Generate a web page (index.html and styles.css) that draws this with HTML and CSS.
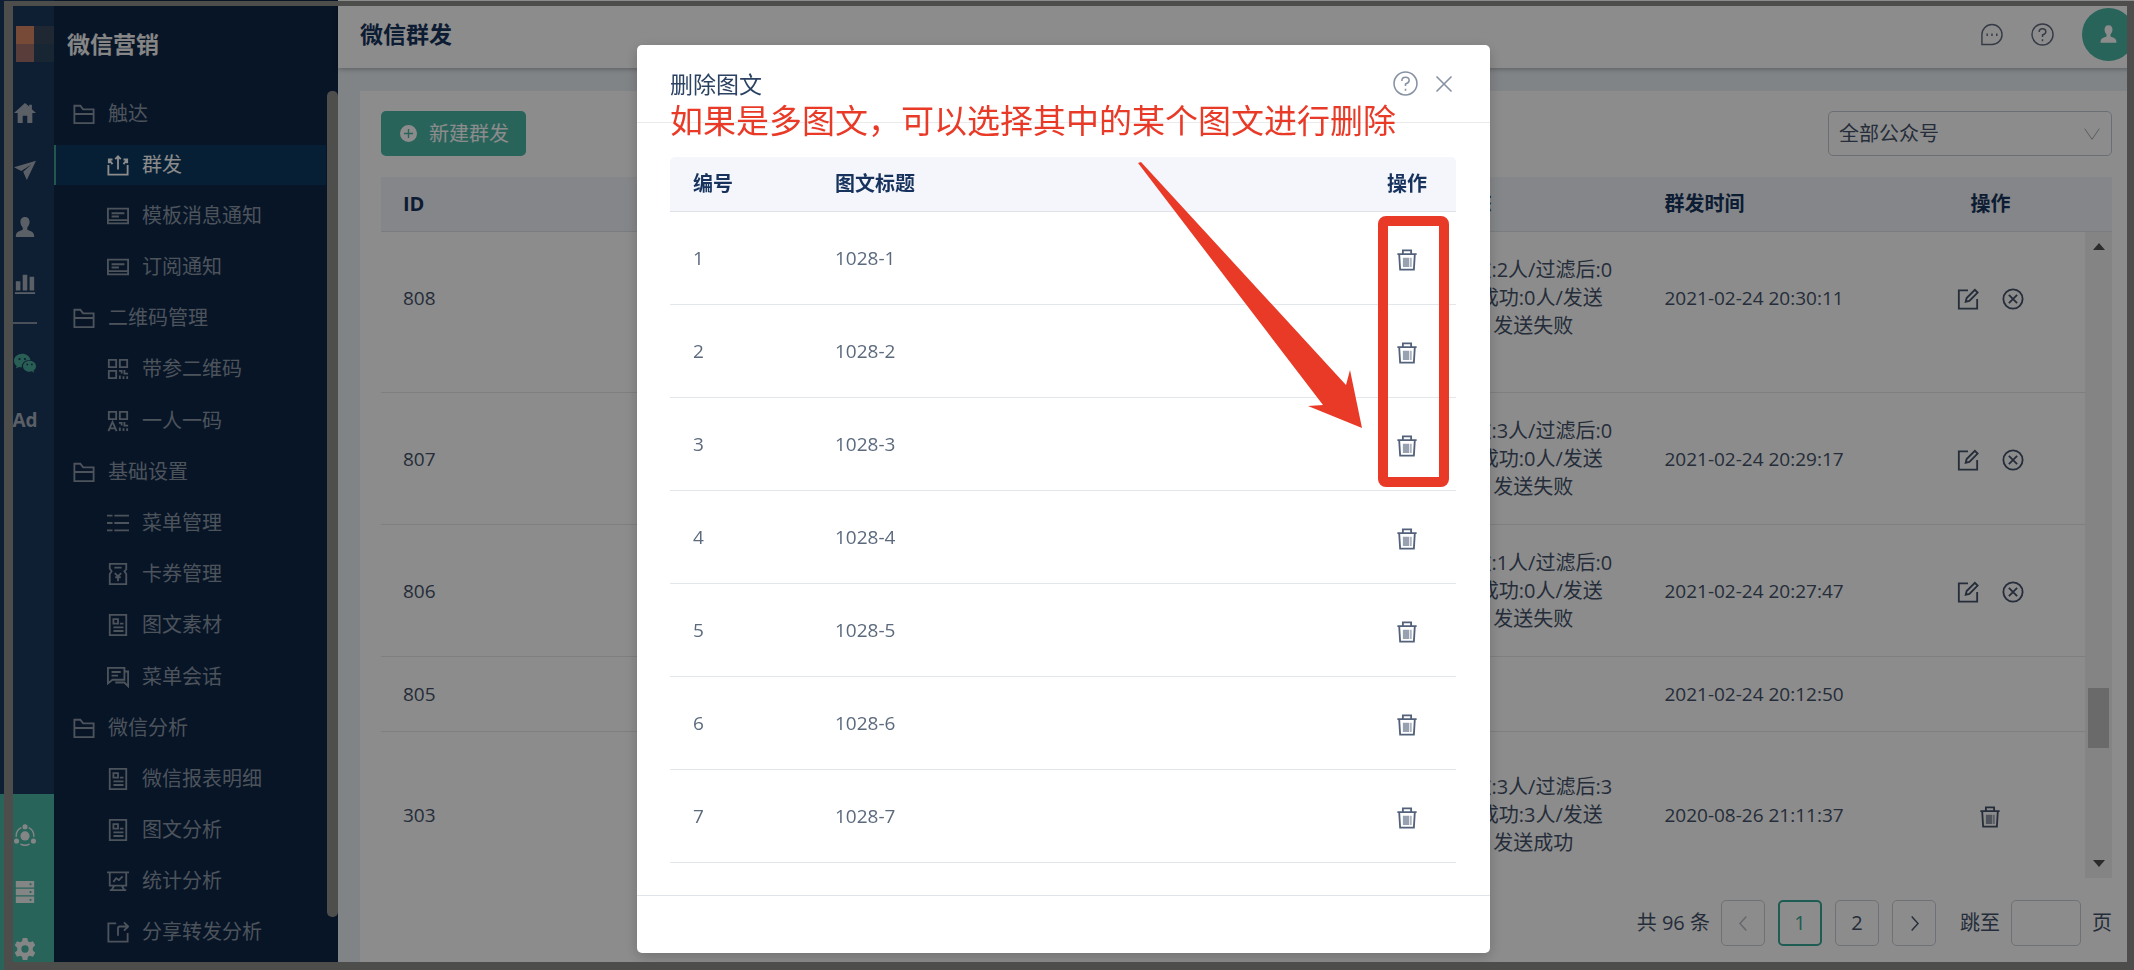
FILE: index.html
```
<!DOCTYPE html>
<html lang="zh-CN">
<head>
    <meta charset="UTF-8">
    <meta name="viewport" content="width=device-width, initial-scale=1.0">
    <title>微信群发</title>
    <link rel="stylesheet" href="styles.css">
</head>
<body>
    <!-- Icon set -->
    <svg class="icon-defs" aria-hidden="true">
        <symbol id="i-home" viewBox="0 0 24 24"><path fill="currentColor" d="M12 1L0 12h4v11h5.500v-8h5v8H20V12h4l-4.500-4.200V3h-3v2z"/></symbol>
        <symbol id="i-plane" viewBox="0 0 24 24"><path fill="currentColor" d="M24 2L0 9l8 4 11-7-9 8 4 9z"/></symbol>
        <symbol id="i-user" viewBox="0 0 24 24"><path fill="currentColor" d="M12 1c-3.500 0-5 2.500-5 5.500 0 3 1.500 4.500 2.500 6v2.500C6 16.500 2 17 2 22v1h20v-1c0-5-4-5.500-7.500-7v-2.500c1-1.500 2.500-3 2.500-6C17 3.500 15.500 1 12 1z"/></symbol>
        <symbol id="i-chart" viewBox="0 0 24 24"><path fill="currentColor" d="M2 9h5v10H2zM9.500 2h5v17h-5zM17 4h5v15h-5zM1 21h22v2H1z"/></symbol>
        <symbol id="i-wechat" viewBox="0 0 24 24"><path fill="currentColor" fill-rule="evenodd" d="M9 2C4 2 0 5.200 0 9.500c0 2.400 1.200 4.300 3 5.700L2 18l3.500-1.700c1 .3 2 .5 3 .5C8 12 12 8.500 18 8.700 17 4.700 13.500 2 9 2zM6 6.500a1.200 1.200 0 1 1 0 2.400 1.200 1.200 0 0 1 0-2.400zm6 0a1.200 1.200 0 1 1 0 2.400 1.200 1.200 0 0 1 0-2.400z"/><path fill="currentColor" fill-rule="evenodd" d="M17 9.500c-4 0-7.200 2.700-7.200 6s3.200 6 7.200 6c.9 0 1.700-.1 2.500-.4L22 22.500l-.7-2.400c1.700-1.100 2.700-2.700 2.700-4.600 0-3.300-3-6-7-6zm-2.500 3a1 1 0 1 1 0 2 1 1 0 0 1 0-2zm5 0a1 1 0 1 1 0 2 1 1 0 0 1 0-2z"/></symbol>
        <symbol id="i-net" viewBox="0 0 24 24"><g fill="currentColor"><circle cx="12" cy="13" r="5"/><circle cx="12" cy="3" r="2.800"/><circle cx="2.800" cy="18.500" r="2.800"/><circle cx="21.200" cy="18.500" r="2.800"/></g><path fill="none" stroke="currentColor" stroke-width="1.500" d="M8 4a10 10 0 0 0-5.500 10M16 4a10 10 0 0 1 5.500 10M7 22q5 2.500 10 0"/></symbol>
        <symbol id="i-server" viewBox="0 0 24 24"><path fill="currentColor" fill-rule="evenodd" d="M2 0h20v7H2zM2 8.500h20v7H2zM2 17h20v7H2zM17 2.500v2h2v-2zM17 11v2h2v-2zM17 19.500v2h2v-2z"/></symbol>
        <symbol id="i-gear" viewBox="0 0 24 24"><path fill="currentColor" fill-rule="evenodd" d="M9.500 0h5l.7 3.600 2 1.100 3.500-1.200L23.200 8l-2.700 2.500v3l2.700 2.500-2.500 4.500-3.500-1.200-2 1.100-.7 3.600h-5l-.7-3.600-2-1.100-3.500 1.200L.8 16l2.700-2.500v-3L.8 8l2.500-4.500 3.500 1.200 2-1.100zM12 8a4 4 0 1 0 0 8 4 4 0 0 0 0-8z"/></symbol>
        <symbol id="i-folder" viewBox="0 0 24 24"><path d="M1.500 22V3H8l3 4h11.500v15zM1.500 12h21"/></symbol>
        <symbol id="i-mass" viewBox="0 0 24 24"><path d="M1.500 12v10.500h21V12M12 17V3M9 5.500l3-3 3 3M2 10V6h4M2.500 6.500L6 11M22 10V6h-4M21.500 6.500L18 11"/></symbol>
        <symbol id="i-msg" viewBox="0 0 24 24"><path d="M1 4h22v16H1zM1 16.500h22M5 9h14M5 12.500h8"/></symbol>
        <symbol id="i-qr" viewBox="0 0 24 24"><path d="M2 2h8v8H2zM14 2h8v8h-8zM2 14h8v8H2zM13 14h3v3M19 13v4h4M14 19v4M18 20v3M22 20v3"/></symbol>
        <symbol id="i-qr-a" viewBox="0 0 24 24"><path d="M2 2h8v8H2zM14 2h8v8h-8zM1.500 23L6 13l4.500 10M3 20h6M13 14h3v3M19 13v4h4M14 19v4M18 20v3M22 20v3"/></symbol>
        <symbol id="i-list" viewBox="0 0 24 24"><path d="M0 4h6M8 4h16M0 12h6M8 12h16M0 20h6M8 20h16"/></symbol>
        <symbol id="i-coupon" viewBox="0 0 24 24"><path d="M3 1h18v6l-2 2 2 3v11H3V12l2-3-2-3zM8 5h8M8.500 11l3.500 3.500 3.500-3.500M12 14v6M9 15.500h6"/></symbol>
        <symbol id="i-doc" viewBox="0 0 24 24"><path d="M3 1h18v22H3zM7 5.500h5v5H7zM14 10.500h4M7 14.500h11M7 18.500h11"/></symbol>
        <symbol id="i-talk" viewBox="0 0 24 24"><path d="M1 2h18v13H6l-5 4zM19 6h4v16l-4-4H9M5 6.500h10M5 10.500h7"/></symbol>
        <symbol id="i-board" viewBox="0 0 24 24"><path d="M0 2.500h24M3 2.500V17h18V2.500M7 13l3-4 3 2 4-4M8 17l-3 5M16 17l3 5M3 22h18"/></symbol>
        <symbol id="i-share" viewBox="0 0 24 24"><path d="M10 2.500H1.500v20h21V13M12 16V8q0-2 2-2h8M18.500 1.500L23 6l-4.500 4.500"/></symbol>
        <symbol id="i-chat" viewBox="0 0 24 24"><path d="M2 22.500V12a10.500 10.500 0 1 1 10.500 10.500zM7.500 11v2.500M12.500 11v2.500M17.500 11v2.500"/></symbol>
        <symbol id="i-help" viewBox="0 0 24 24"><path d="M12 1a11 11 0 1 0 0 22 11 11 0 0 0 0-22zM8.500 9.500Q8.500 6 12 6t3.500 3q0 2-3.500 3.500V14.500M12 17v2"/></symbol>
        <symbol id="i-close" viewBox="0 0 24 24"><path d="M3 3l18 18M21 3L3 21"/></symbol>
        <symbol id="i-plus" viewBox="0 0 24 24"><path fill="currentColor" fill-rule="evenodd" d="M12 0a12 12 0 1 0 0 24 12 12 0 0 0 0-24zM11 5.500h2V11h5.500v2H13v5.500h-2V13H5.500v-2H11z"/></symbol>
        <symbol id="i-edit" viewBox="0 0 24 24"><path d="M12 2.500H2v20h20V12M9.500 15l1-4L19.500 2l3 3-9 9z"/></symbol>
        <symbol id="i-cancel" viewBox="0 0 24 24"><path d="M12 1.500a10.500 10.500 0 1 0 0 21 10.500 10.500 0 0 0 0-21zM7.500 7.500l9 9M16.500 7.500l-9 9"/></symbol>
        <symbol id="i-trash" viewBox="0 0 24 24"><path d="M1.500 5.500h21M7.500 5V1.500h9V5M3.500 6l1 16.500h15L20.500 6"/><path fill="currentColor" stroke="none" opacity=".6" d="M7.500 9.500h7v10h-7zM15.500 9.500h1.500v10h-1.500z"/></symbol>
        <symbol id="i-down" viewBox="0 0 24 24"><path d="M1 4l11 16L23 4"/></symbol>
        <symbol id="i-prev" viewBox="0 0 24 24"><path d="M16 2L7 12l9 10"/></symbol>
        <symbol id="i-next" viewBox="0 0 24 24"><path d="M8 2l9 10-9 10"/></symbol>
    </svg>

    <div class="app">
        <nav class="rail" aria-label="主导航">
            <div class="logo"><i></i><i></i><i></i><i></i></div>
            <a href="#"><svg class="icon"><use href="#i-home"/></svg></a>
            <a href="#"><svg class="icon"><use href="#i-plane"/></svg></a>
            <a href="#"><svg class="icon"><use href="#i-user"/></svg></a>
            <a href="#"><svg class="icon"><use href="#i-chart"/></svg></a>
            <hr>
            <a href="#" class="wechat"><svg class="icon"><use href="#i-wechat"/></svg></a>
            <a href="#">Ad</a>
            <div class="rail-bottom">
                <a href="#"><svg class="icon"><use href="#i-net"/></svg></a>
                <a href="#"><svg class="icon"><use href="#i-server"/></svg></a>
                <a href="#"><svg class="icon"><use href="#i-gear"/></svg></a>
            </div>
        </nav>

        <aside class="sidebar">
            <h2>微信营销</h2>
            <div class="sidebar-body">
                <ul class="menu">
                    <li class="group"><svg class="icon"><use href="#i-folder"/></svg>触达</li>
                    <li><a href="#" class="active"><svg class="icon"><use href="#i-mass"/></svg>群发</a></li>
                    <li><a href="#"><svg class="icon"><use href="#i-msg"/></svg>模板消息通知</a></li>
                    <li><a href="#"><svg class="icon"><use href="#i-msg"/></svg>订阅通知</a></li>
                    <li class="group"><svg class="icon"><use href="#i-folder"/></svg>二维码管理</li>
                    <li><a href="#"><svg class="icon"><use href="#i-qr"/></svg>带参二维码</a></li>
                    <li><a href="#"><svg class="icon"><use href="#i-qr-a"/></svg>一人一码</a></li>
                    <li class="group"><svg class="icon"><use href="#i-folder"/></svg>基础设置</li>
                    <li><a href="#"><svg class="icon"><use href="#i-list"/></svg>菜单管理</a></li>
                    <li><a href="#"><svg class="icon"><use href="#i-coupon"/></svg>卡券管理</a></li>
                    <li><a href="#"><svg class="icon"><use href="#i-doc"/></svg>图文素材</a></li>
                    <li><a href="#"><svg class="icon"><use href="#i-talk"/></svg>菜单会话</a></li>
                    <li class="group"><svg class="icon"><use href="#i-folder"/></svg>微信分析</li>
                    <li><a href="#"><svg class="icon"><use href="#i-doc"/></svg>微信报表明细</a></li>
                    <li><a href="#"><svg class="icon"><use href="#i-doc"/></svg>图文分析</a></li>
                    <li><a href="#"><svg class="icon"><use href="#i-board"/></svg>统计分析</a></li>
                    <li><a href="#"><svg class="icon"><use href="#i-share"/></svg>分享转发分析</a></li>
                </ul>
                <div class="menu-scroll"></div>
            </div>
        </aside>

        <main class="main">
            <header class="topbar">
                <h1>微信群发</h1>
                <button type="button" class="icon-btn" aria-label="消息"><svg class="icon"><use href="#i-chat"/></svg></button>
                <button type="button" class="icon-btn" aria-label="帮助"><svg class="icon"><use href="#i-help"/></svg></button>
                <button type="button" class="avatar" aria-label="账号"><svg class="icon"><use href="#i-user"/></svg></button>
            </header>

            <section class="card">
                <div class="toolbar">
                    <button type="button" class="btn-new"><svg class="icon"><use href="#i-plus"/></svg>新建群发</button>
                    <div class="select">
                        <select aria-label="公众号">
                            <option>全部公众号</option>
                        </select>
                        <svg class="icon"><use href="#i-down"/></svg>
                    </div>
                </div>

                <div class="table-wrap">
                    <table class="list">
                        <colgroup>
                            <col>
                            <col class="col-state">
                            <col class="col-time">
                            <col class="col-op">
                        </colgroup>
                        <thead>
                            <tr><th>ID</th><th>发送状态</th><th>群发时间</th><th class="op">操作</th></tr>
                        </thead>
                        <tbody>
                            <tr class="first">
                                <td>808</td>
                                <td class="state">发送总数:2人/过滤后:0<br>人/发送成功:0人/发送<br>失败:0人 发送失败</td>
                                <td>2021-02-24 20:30:11</td>
                                <td class="op">
                                    <button type="button" class="icon-btn" aria-label="编辑"><svg class="icon"><use href="#i-edit"/></svg></button>
                                    <button type="button" class="icon-btn" aria-label="取消"><svg class="icon"><use href="#i-cancel"/></svg></button>
                                </td>
                            </tr>
                            <tr>
                                <td>807</td>
                                <td class="state">发送总数:3人/过滤后:0<br>人/发送成功:0人/发送<br>失败:0人 发送失败</td>
                                <td>2021-02-24 20:29:17</td>
                                <td class="op">
                                    <button type="button" class="icon-btn" aria-label="编辑"><svg class="icon"><use href="#i-edit"/></svg></button>
                                    <button type="button" class="icon-btn" aria-label="取消"><svg class="icon"><use href="#i-cancel"/></svg></button>
                                </td>
                            </tr>
                            <tr>
                                <td>806</td>
                                <td class="state">发送总数:1人/过滤后:0<br>人/发送成功:0人/发送<br>失败:0人 发送失败</td>
                                <td>2021-02-24 20:27:47</td>
                                <td class="op">
                                    <button type="button" class="icon-btn" aria-label="编辑"><svg class="icon"><use href="#i-edit"/></svg></button>
                                    <button type="button" class="icon-btn" aria-label="取消"><svg class="icon"><use href="#i-cancel"/></svg></button>
                                </td>
                            </tr>
                            <tr class="short">
                                <td>805</td>
                                <td></td>
                                <td>2021-02-24 20:12:50</td>
                                <td></td>
                            </tr>
                            <tr class="last">
                                <td>303</td>
                                <td class="state">发送总数:3人/过滤后:3<br>人/发送成功:3人/发送<br>失败:0人 发送成功</td>
                                <td>2020-08-26 21:11:37</td>
                                <td class="op">
                                    <button type="button" class="icon-btn" aria-label="删除"><svg class="icon"><use href="#i-trash"/></svg></button>
                                </td>
                            </tr>
                        </tbody>
                    </table>
                    <div class="scrollbar">
                        <div class="scroll-head"></div>
                        <div class="scroll-track">
                            <span class="arrow-up"></span>
                            <span class="thumb"></span>
                            <span class="arrow-down"></span>
                        </div>
                    </div>
                </div>

                <div class="pagination">
                    <span>共 96 条</span>
                    <div class="pages">
                        <button type="button" disabled aria-label="上一页"><svg class="icon"><use href="#i-prev"/></svg></button>
                        <button type="button" class="current">1</button>
                        <button type="button">2</button>
                        <button type="button" aria-label="下一页"><svg class="icon"><use href="#i-next"/></svg></button>
                    </div>
                    <label for="jump">跳至</label>
                    <input type="text" id="jump">
                    <span>页</span>
                </div>
            </section>
        </main>
    </div>

    <div class="mask">
        <section class="modal" role="dialog" aria-labelledby="modalTitle">
            <header class="modal-header">
                <h3 id="modalTitle">删除图文</h3>
                <button type="button" class="icon-btn" aria-label="帮助"><svg class="icon"><use href="#i-help"/></svg></button>
                <button type="button" class="icon-btn close" aria-label="关闭"><svg class="icon"><use href="#i-close"/></svg></button>
            </header>
            <div class="modal-body">
                <table class="articles">
                    <colgroup>
                        <col class="col-no">
                        <col>
                        <col class="col-del">
                    </colgroup>
                    <thead>
                        <tr><th>编号</th><th>图文标题</th><th class="op">操作</th></tr>
                    </thead>
                    <tbody>
                        <tr><td>1</td><td>1028-1</td><td class="op"><button type="button" class="icon-btn" aria-label="删除"><svg class="icon"><use href="#i-trash"/></svg></button></td></tr>
                        <tr><td>2</td><td>1028-2</td><td class="op"><button type="button" class="icon-btn" aria-label="删除"><svg class="icon"><use href="#i-trash"/></svg></button></td></tr>
                        <tr><td>3</td><td>1028-3</td><td class="op"><button type="button" class="icon-btn" aria-label="删除"><svg class="icon"><use href="#i-trash"/></svg></button></td></tr>
                        <tr><td>4</td><td>1028-4</td><td class="op"><button type="button" class="icon-btn" aria-label="删除"><svg class="icon"><use href="#i-trash"/></svg></button></td></tr>
                        <tr><td>5</td><td>1028-5</td><td class="op"><button type="button" class="icon-btn" aria-label="删除"><svg class="icon"><use href="#i-trash"/></svg></button></td></tr>
                        <tr><td>6</td><td>1028-6</td><td class="op"><button type="button" class="icon-btn" aria-label="删除"><svg class="icon"><use href="#i-trash"/></svg></button></td></tr>
                        <tr><td>7</td><td>1028-7</td><td class="op"><button type="button" class="icon-btn" aria-label="删除"><svg class="icon"><use href="#i-trash"/></svg></button></td></tr>
                    </tbody>
                </table>
            </div>
            <footer class="modal-footer"></footer>

            <!-- Callout over the dialog -->
            <p class="note">如果是多图文，可以选择其中的某个图文进行删除</p>
            <svg class="note-arrow" viewBox="0 0 226 268" aria-hidden="true"><path d="M0 2L3 1 208 224 212 209 224 267 170 245 185 244z"/></svg>
            <div class="note-box"></div>
        </section>
    </div>

    <div class="frame"></div>
</body>
</html>
```

FILE: styles.css
```
* {
    box-sizing: border-box;
}
body {
    margin: 0;
    font-family: "Open Sans", "Noto Sans CJK SC", sans-serif;
    font-size: 20px;
    line-height: 28px;
    color: #45526a;
    background: #fff;
    overflow: hidden;
}
h1, h2, h3, p, ul {
    margin: 0;
    padding: 0;
}
h1, h2, h3 {
    font-size: 23px;
    line-height: 32px;
}
button, input, select {
    font: inherit;
    color: inherit;
    margin: 0;
}
a {
    color: inherit;
    text-decoration: none;
}
.icon-defs {
    position: absolute;
    width: 0;
    height: 0;
}
.icon {
    display: block;
    width: 22px;
    height: 22px;
    flex: none;
    fill: none;
    stroke: currentColor;
    stroke-width: 1.5;
}
.icon-btn {
    display: inline-block;
    padding: 0;
    border: 0;
    background: none;
    cursor: pointer;
}
.app {
    display: flex;
    height: 100vh;
}

/* Icon rail */
.rail {
    display: flex;
    flex-direction: column;
    width: 54px;
    flex: none;
    padding-top: 26px;
    color: #a5afbb;
    background: #1b375e;
}
.rail a {
    display: flex;
    align-items: center;
    justify-content: center;
    height: 57px;
    flex: none;
    padding-right: 4px;
    font-size: 19px;
    font-weight: bold;
}
.rail .icon {
    stroke: none;
}
.rail hr {
    width: 24px;
    height: 2px;
    margin: 10px 0 10px 13px;
    border: 0;
    background: #8793a3;
}
.rail .wechat {
    color: #4bab9b;
}
.logo {
    display: grid;
    grid-template-columns: 18px 1fr;
    grid-template-rows: 18px 18px;
    margin-bottom: 22px;
    padding-left: 16px;
}
.logo i {
    background: #3a4a5b;
}
.logo i:nth-child(1) {
    background: #d98764;
}
.logo i:nth-child(3) {
    background: #a0706a;
}
.logo i:nth-child(4) {
    background: #2c4560;
}
.rail-bottom {
    height: 176px;
    margin-top: auto;
    padding-top: 12px;
    overflow: hidden;
    color: #f0f5f4;
    background: #4bb6a7;
}
.rail-bottom a {
    height: 57px;
}

/* Menu */
.sidebar {
    display: flex;
    flex-direction: column;
    width: 284px;
    flex: none;
    color: #8b97a6;
    background: #0e2748;
}
.sidebar h2 {
    padding: 28px 0 28px 13px;
    color: #f4f4f4;
}
.sidebar-body {
    display: flex;
    flex: 1;
    padding-bottom: 12px;
}
.menu {
    display: grid;
    grid-auto-rows: 1fr;
    align-items: center;
    flex: 1;
    list-style: none;
}
.menu .group {
    display: flex;
    align-items: center;
    gap: 13px;
    padding-left: 19px;
}
.menu a {
    display: flex;
    align-items: center;
    gap: 13px;
    height: 40px;
    padding-left: 51px;
    border-left: 2px solid transparent;
}
.menu .icon {
    stroke-width: 2;
}
.menu a.active {
    color: #fff;
    background: #0c3a5f;
    border-left-color: #3f9d90;
}
.menu-scroll {
    width: 11px;
    margin: 3px 0 41px 1px;
    border-radius: 5px;
    background: #8f8f8d;
}

/* Page */
.main {
    display: flex;
    flex-direction: column;
    flex: 1;
    background: #ebf0f6;
}
.topbar {
    display: flex;
    align-items: center;
    height: 68px;
    padding-left: 22px;
    gap: 28px;
    color: #616b80;
    background: #fff;
    box-shadow: 0 1px 5px rgba(0, 0, 0, 0.3);
}
.topbar h1 {
    flex: 1;
    color: #17335d;
}
.topbar .icon-btn .icon {
    width: 23px;
    height: 23px;
}
.avatar {
    display: flex;
    align-items: center;
    justify-content: center;
    width: 53px;
    height: 53px;
    margin-right: -1px;
    padding: 0;
    border: 0;
    border-radius: 50%;
    color: #fff;
    background: #4bb6a7;
}
.avatar .icon {
    width: 19px;
    stroke: none;
}
.card {
    flex: 1;
    margin: 23px 0 0 22px;
    padding: 20px 22px 0 21px;
    background: #fff;
}
.toolbar {
    display: flex;
    justify-content: space-between;
    margin-bottom: 21px;
}
.btn-new {
    display: flex;
    align-items: center;
    gap: 12px;
    height: 45px;
    padding: 0 17px 0 19px;
    border: 0;
    border-radius: 5px;
    color: #fff;
    background: #4bb6a7;
}
.btn-new .icon {
    width: 17px;
    height: 17px;
    stroke: none;
}
.select {
    display: flex;
    align-items: center;
    width: 284px;
    height: 45px;
    border: 1px solid #c3c9d3;
    border-radius: 5px;
}
.select select {
    flex: 1;
    height: 43px;
    padding: 0 10px;
    border: 0;
    background: none;
    appearance: none;
}
.select .icon {
    width: 16px;
    height: 16px;
    margin-right: 11px;
    color: #a3a9b3;
}
table {
    width: 100%;
    table-layout: fixed;
    border-collapse: separate;
    border-spacing: 0;
}
th {
    height: 55px;
    padding: 0 0 0 23px;
    border-bottom: 1px solid #dfe3e8;
    text-align: left;
    color: #17335d;
    background: #f4f6fb;
}
td {
    padding: 0 0 0 23px;
    border-bottom: 1px solid #e4e7ea;
    font-size: 19px;
}
th.op, td.op {
    padding-left: 0;
    text-align: center;
}
.table-wrap {
    display: flex;
}
.list td {
    height: 132px;
}
.list th, .list td:not(.op) {
    padding-left: 22px;
}
.list th {
    background: #f1f5fa;
}
.list th.op {
    padding-left: 0;
}
.list td.state {
    font-size: 20px;
    white-space: nowrap;
}
.list .first td {
    height: 161px;
    padding-bottom: 29px;
}
.list .short td {
    height: 75px;
}
.list .last td {
    height: 146px;
    padding-top: 20px;
    border-bottom: 0;
}
.list .icon-btn {
    margin: 0 9px;
    vertical-align: middle;
}
.list .icon {
    stroke-width: 2;
}
.col-state, .col-time {
    width: 253px;
}
.col-op {
    width: 190px;
}
.scrollbar {
    display: flex;
    flex-direction: column;
    width: 27px;
}
.scroll-head {
    height: 55px;
    border-bottom: 1px solid #dfe3e8;
    background: #f1f5fa;
}
.scroll-track {
    display: flex;
    flex-direction: column;
    align-items: center;
    flex: 1;
    padding: 11px 0;
    background: #f1f1f1;
}
.arrow-up, .arrow-down {
    border: 6px solid transparent;
    border-top-width: 0;
    border-bottom: 7px solid #505050;
}
.arrow-down {
    border-bottom: 0;
    border-top: 7px solid #505050;
}
.thumb {
    width: 21px;
    height: 60px;
    margin: auto 0 112px;
    background: #c1c1c1;
}
.pagination {
    display: flex;
    align-items: center;
    justify-content: flex-end;
    gap: 11px;
    margin-top: 22px;
}
.pages {
    display: flex;
    gap: 13px;
    margin-right: 13px;
}
.pages button {
    display: flex;
    align-items: center;
    justify-content: center;
    width: 44px;
    height: 46px;
    padding: 0;
    border: 1px solid #c9ced6;
    border-radius: 5px;
    background: none;
}
.pages .icon {
    width: 17px;
    height: 17px;
    stroke-width: 2;
}
.pages button:disabled {
    color: #b8bcc3;
}
.pages .current {
    color: #3aa897;
    border: 2px solid #3aa897;
}
.pagination input {
    width: 70px;
    height: 46px;
    border: 1px solid #c9ced6;
    border-radius: 5px;
    background: none;
}

/* Delete dialog */
.mask {
    position: fixed;
    inset: 0;
    display: flex;
    align-items: flex-start;
    justify-content: center;
    padding: 45px 7px 0 0;
    background: rgba(0, 0, 0, 0.45);
}
.modal {
    position: relative;
    width: 853px;
    border-radius: 5px;
    background: #fff;
    box-shadow: 0 4px 14px rgba(0, 0, 0, 0.2);
}
.modal-header {
    display: flex;
    align-items: center;
    height: 78px;
    padding: 0 36px 0 33px;
    border-bottom: 1px solid #e8eaec;
    color: #8792a3;
}
.modal-header h3 {
    flex: 1;
    font-weight: normal;
    color: #2b4263;
}
.modal-header .icon {
    width: 25px;
    height: 25px;
}
.modal-header .close {
    margin-left: 16px;
}
.modal-header .close .icon {
    width: 20px;
    height: 22px;
    stroke-width: 2;
}
.modal-body {
    padding: 34px 34px 32px 33px;
}
.articles td {
    height: 93px;
    color: #5c6a7e;
}
.articles th:first-child {
    border-top-left-radius: 5px;
}
.articles th:last-child {
    border-top-right-radius: 5px;
}
.articles .icon {
    stroke-width: 2;
    color: #53627a;
}
.articles .icon-btn {
    vertical-align: middle;
}
.col-no {
    width: 142px;
}
.col-del {
    width: 98px;
}
.modal-footer {
    height: 58px;
    border-top: 1px solid #e1e4ea;
}

/* Callout */
.note {
    position: absolute;
    top: 52px;
    left: 33px;
    font-size: 33px;
    line-height: 48px;
    white-space: nowrap;
    color: #e93a28;
}
.note-arrow {
    position: absolute;
    top: 116px;
    right: 126px;
    width: 226px;
    height: 268px;
    fill: #e93a28;
}
.note-box {
    position: absolute;
    top: 171px;
    right: 41px;
    width: 71px;
    height: 271px;
    border: 10px solid #e93a28;
    border-radius: 8px;
}
.frame {
    position: fixed;
    inset: 1px 0 0 4px;
    border: solid #4d4d4b;
    border-width: 5px 7px 8px 9px;
    pointer-events: none;
}
```
